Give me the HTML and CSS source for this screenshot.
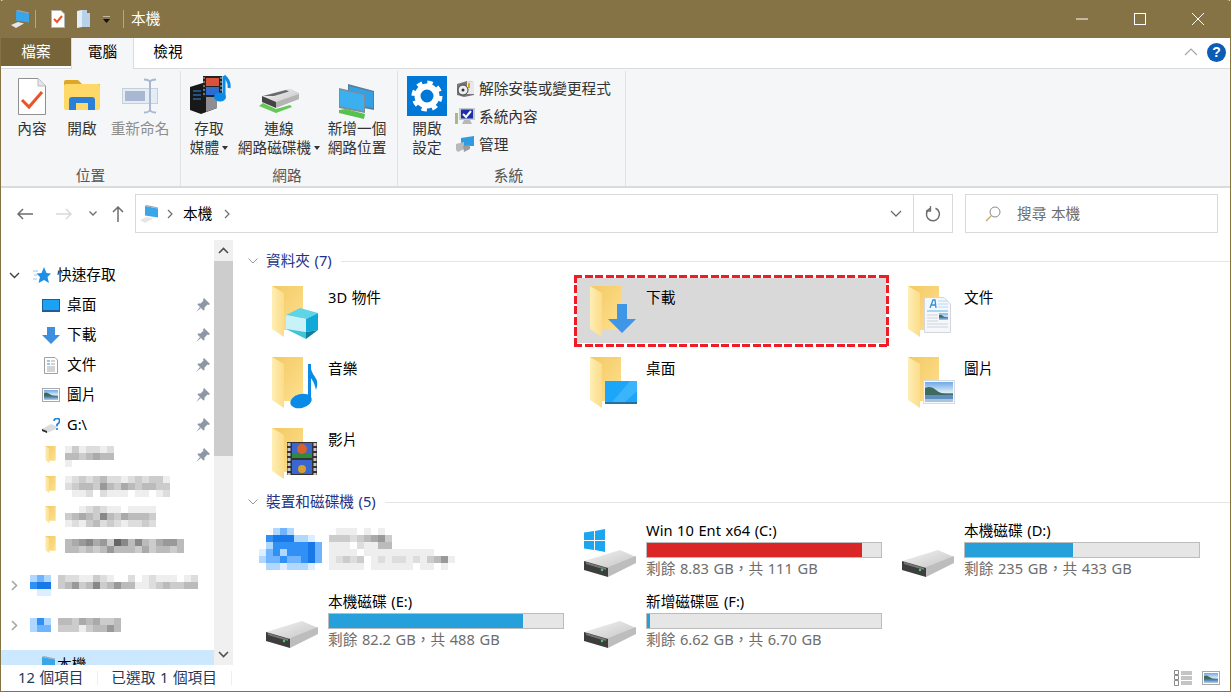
FILE: index.html
```html
<!DOCTYPE html>
<html lang="zh-Hant">
<head>
<meta charset="utf-8">
<title>本機</title>
<link rel="stylesheet" href="styles.css">
</head>
<body>
<svg class="defs" aria-hidden="true">
  <defs>
    <linearGradient id="gb" x1="0" y1="0" x2="1" y2="1"><stop offset="0" stop-color="#f2c964"/><stop offset="1" stop-color="#ffe08e"/></linearGradient>
    <linearGradient id="gf" x1="0" y1="0" x2="1" y2="0"><stop offset="0" stop-color="#ffeeb4"/><stop offset="1" stop-color="#fbdc8a"/></linearGradient>
    <linearGradient id="gsky" x1="0" y1="0" x2="0" y2="1"><stop offset="0" stop-color="#6ea8e6"/><stop offset="1" stop-color="#e4f0f8"/></linearGradient>
    <linearGradient id="gdisk" x1="0" y1="0" x2="1" y2="1"><stop offset="0" stop-color="#f4f4f4"/><stop offset="1" stop-color="#c2c2c2"/></linearGradient>
    <symbol id="folder" viewBox="0 0 34 54">
      <path d="M0 0H31V44H12Z" fill="url(#gb)"/>
      <path d="M0 0L12 7V51L0 43Z" fill="url(#gf)"/>
    </symbol>
    <symbol id="disk" viewBox="0 0 52 28">
      <path d="M0 11L36 0 52 7 22 20Z" fill="url(#gdisk)"/>
      <path d="M22 18L52 6V13L24 27Z" fill="#bdbdbd"/>
      <path d="M0 11L24 18V27L0 20Z" fill="#3d3d3d"/>
      <path d="M2 12L22 18V20L2 14Z" fill="#777"/>
      <circle cx="18" cy="20" r="1.2" fill="#3fd16a"/>
    </symbol>
    <symbol id="pin" viewBox="0 0 14 14">
      <path d="M8 0L14 6 12.500 7 11.500 6.500 8.500 9.500 8.500 12 7.500 12.500 1.500 6.500 2 5.500H4.500L7.500 2.500 7 1.500Z" fill="#8d97a5"/>
      <path d="M4 9L0 14 5 10Z" fill="#8d97a5"/>
    </symbol>
    <symbol id="scene" viewBox="0 0 28 20">
      <rect width="28" height="11" fill="url(#gsky)"/>
      <rect y="11" width="28" height="9" fill="#5f8fc0"/>
      <path d="M0 6Q6 3 11 8T28 12V13H0Z" fill="#3f6b5e"/>
      <rect y="17" width="28" height="3" fill="#aac4de"/>
    </symbol>
    <symbol id="picture" viewBox="0 0 18 14">
      <rect x=".5" y=".5" width="17" height="13" fill="#fff" stroke="#a8a8a8"/>
      <use href="#scene" x="2" y="2" width="14" height="10"/>
    </symbol>
    <symbol id="pc" viewBox="0 0 20 18">
      <path d="M6 1L19 3.500V12.500L6 10.500Z" fill="#3aa6ea"/>
      <path d="M6 1L7.500 0 19 2.500V3.500Z" fill="#9aa9b6"/>
      <path d="M1 15L8 12 14 13.500 6 18Z" fill="#e6e6e6"/>
    </symbol>
  </defs>
</svg>

<div class="window">
  <header class="titlebar">
    <svg class="qa-pc" width="20" height="18"><use href="#pc"/></svg>
    <span class="qa-sep"></span>
    <svg class="qa-check" width="14" height="18" viewBox="0 0 14 18"><path d="M.5.5H10L13.500 4V17.500H.5Z" fill="#fff" stroke="#b5b5b5"/><path d="M3 9L6 12 11 6" fill="none" stroke="#e8552a" stroke-width="2"/></svg>
    <svg class="qa-doc" width="13" height="18" viewBox="0 0 13 18"><path d="M0 1L5 0V17L0 18Z" fill="#e3eefb"/><path d="M5 0H10V3H13V17H5Z" fill="#b9d0ea"/></svg>
    <svg class="qa-drop" width="9" height="7" viewBox="0 0 9 7"><path d="M1 0H8" stroke="#fff"/><path d="M1 3H8L4.500 7Z" fill="#111"/></svg>
    <span class="qa-sep qa-sep2"></span>
    <span class="title">本機</span>
    <div class="winctl">
      <svg width="58" height="38" viewBox="0 0 58 38"><path d="M23 19H35" stroke="#fff"/></svg>
      <svg width="58" height="38" viewBox="0 0 58 38"><rect x="23.500" y="13.500" width="11" height="11" fill="none" stroke="#fff"/></svg>
      <svg width="58" height="38" viewBox="0 0 58 38"><path d="M23 13L35 25M35 13L23 25" stroke="#fff"/></svg>
    </div>
  </header>

  <nav class="tabs">
    <span class="tab tab-file">檔案</span>
    <span class="tab tab-on">電腦</span>
    <span class="tab tab-view">檢視</span>
    <svg class="rib-toggle" width="14" height="8" viewBox="0 0 14 8"><path d="M1 7L7 1 13 7" fill="none" stroke="#a6a6a6" stroke-width="1.200"/></svg>
    <span class="help">?</span>
  </nav>

  <section class="ribbon">
    <div class="group g1">
      <div class="btns">
        <div class="rbtn w48">
          <svg width="30" height="48" viewBox="0 0 30 48"><path d="M1.500 6.500H21L28.500 14V42.500H1.500Z" fill="#fff" stroke="#8f8f8f"/><path d="M21 6.500V14H28.500" fill="#e6e6e6" stroke="#bbb"/><path d="M5 28L12 35 25 20" fill="none" stroke="#e8552a" stroke-width="3"/></svg>
          <span>內容</span>
        </div>
        <div class="rbtn w52">
          <svg width="36" height="48" viewBox="0 0 36 48"><path d="M0 10Q0 8 2 8H14L18 12H36V14H0Z" fill="#dfa628"/><rect y="12" width="36" height="26" rx="2" fill="#ffd967"/><path d="M5 38V28Q5 25 8 25H28Q31 25 31 28V38H24V31H12V38Z" fill="#2a7fd8"/></svg>
          <span>開啟</span>
        </div>
        <div class="rbtn w64 off">
          <svg width="37" height="48" viewBox="0 0 37 48"><rect x=".5" y="16.500" width="35" height="15" fill="#e6ecf4" stroke="#c4d0de"/><rect x="3" y="19" width="20" height="10" fill="#a9b8d2"/><path d="M22 7.500Q27 7.500 28 10V38Q27 40.500 22 40.500M34 7.500Q29 7.500 28 10V38Q29 40.500 34 40.500" fill="none" stroke="#a9b8d2" stroke-width="2"/></svg>
          <span>重新命名</span>
        </div>
      </div>
      <div class="glabel">位置</div>
    </div>
    <div class="group g2">
      <div class="btns">
        <div class="rbtn w44">
          <svg width="44" height="48" viewBox="0 0 44 48"><path d="M3 15L19 10 30 15V36L14 42 3 38Z" fill="#181818"/><path d="M19 17L30 15V36L19 40Z" fill="#8d8d93"/><path d="M6 19H14M6 23H14M6 27H14" stroke="#2a8ee0"/><rect x="16" y="4" width="19" height="21" fill="#222"/><path d="M17 5V24M34 5V24" stroke="#bbb" stroke-dasharray="2 2"/><rect x="19" y="6" width="13" height="8" fill="#d8523c"/><rect x="19" y="15" width="13" height="8" fill="#2f6ccf"/><path d="M37 4V24" stroke="#0b8be6" stroke-width="3"/><ellipse cx="33" cy="25" rx="6" ry="4.500" fill="#0b8be6"/><path d="M37 4Q43 9 42 16" fill="none" stroke="#0b8be6" stroke-width="3"/></svg>
          <span>存取</span><span class="rline">媒體<i class="caret"></i></span>
        </div>
        <div class="rbtn w82">
          <svg width="42" height="48" viewBox="0 0 42 48"><path d="M4 24L30 17Q32 16.500 34 17.500L41 21V27L18 35 4 30Z" fill="url(#gdisk)"/><path d="M4 24L18 30V36L4 30Z" fill="#444"/><path d="M18 30L41 22V27L18 36Z" fill="#b4b4b4"/><path d="M5 24L28 18 31 19.500 16 24Z" fill="#6a6a6a"/><path d="M1 34L5 31 18 37 32 33 34 35 18 41Z" fill="#66c75a"/></svg>
          <span>連線</span><span class="rline">網路磁碟機<i class="caret"></i></span>
        </div>
        <div class="rbtn w62">
          <svg width="38" height="48" viewBox="0 0 38 48"><path d="M10 12L36 19V38L10 33Z" fill="#5a7d94"/><path d="M11 14L35 20V36L11 31Z" fill="#33a1e8"/><path d="M1 16L27 22V41L1 36Z" fill="#7d8e9a"/><path d="M2 18L26 23V39L2 34Z" fill="#3ab0f0"/><path d="M1 38L8 37 27 42 26 47 1 41Z" fill="#57c14f"/></svg>
          <span>新增一個</span><span>網路位置</span>
        </div>
      </div>
      <div class="glabel">網路</div>
    </div>
    <div class="group g3">
      <div class="btns">
        <div class="rbtn w44">
          <svg width="40" height="48" viewBox="0 0 40 48"><rect y="4" width="40" height="40" fill="#0078d7"/><circle cx="20" cy="24" r="13" fill="none" stroke="#fff" stroke-width="5" stroke-dasharray="5.200 5"/><circle cx="20" cy="24" r="9.500" fill="none" stroke="#fff" stroke-width="6"/></svg>
          <span>開啟</span><span>設定</span>
        </div>
        <ul class="rlist">
          <li><svg width="18" height="18" viewBox="0 0 18 18"><path d="M1 5L11 2 18 3V16L8 18 1 16Z" fill="#777"/><path d="M11 2L18 3V15L11 15Z" fill="#e8e8e8"/><circle cx="7" cy="11" r="5" fill="#eee" stroke="#444"/><circle cx="7" cy="11" r="1.500" fill="#333"/><path d="M13 4V9" stroke="#e8a020" stroke-width="2"/></svg><span>解除安裝或變更程式</span></li>
          <li><svg width="20" height="18" viewBox="0 0 20 18"><rect x="4" y="1" width="16" height="12" fill="#c8c8c8"/><rect x="6" y="2.500" width="12" height="9" fill="#1a2fb0"/><path d="M8 7L11 10 16 4" fill="none" stroke="#fff" stroke-width="2"/><path d="M9 13H15L17 17H7Z" fill="#b8b8b8"/><rect y="6" width="3" height="11" fill="#a8b88c"/></svg><span>系統內容</span></li>
          <li><svg width="20" height="18" viewBox="0 0 20 18"><path d="M6 3L19 1V11L6 11Z" fill="#2f9be0"/><path d="M1 9L9 7V14L3 17 1 15Z" fill="#b9b9b9"/><path d="M8 11L15 10V14L9 17Z" fill="#9c9c9c"/></svg><span>管理</span></li>
        </ul>
      </div>
      <div class="glabel">系統</div>
    </div>
  </section>

  <section class="addrrow">
    <div class="navbtns">
      <svg width="16" height="12" viewBox="0 0 16 12"><path d="M16 6H1M6 1L1 6 6 11" fill="none" stroke="#6d6d6d" stroke-width="1.500"/></svg>
      <svg width="16" height="12" viewBox="0 0 16 12"><path d="M0 6H15M10 1L15 6 10 11" fill="none" stroke="#d9d9d9" stroke-width="1.500"/></svg>
      <svg width="8" height="5" viewBox="0 0 8 5"><path d="M.5.500L4 4 7.500.500" fill="none" stroke="#6d6d6d" stroke-width="1.300"/></svg>
      <svg width="12" height="16" viewBox="0 0 12 16"><path d="M6 16V1M1 6L6 1 11 6" fill="none" stroke="#6d6d6d" stroke-width="1.500"/></svg>
    </div>
    <div class="addr">
      <svg class="addr-pc" width="20" height="18"><use href="#pc"/></svg>
      <svg class="crumb" width="6" height="10" viewBox="0 0 6 10"><path d="M1 1L5 5 1 9" fill="none" stroke="#6d6d6d" stroke-width="1.200"/></svg>
      <span class="addr-text">本機</span>
      <svg class="crumb" width="6" height="10" viewBox="0 0 6 10"><path d="M1 1L5 5 1 9" fill="none" stroke="#6d6d6d" stroke-width="1.200"/></svg>
      <svg class="addr-drop" width="12" height="7" viewBox="0 0 12 7"><path d="M1 1L6 6 11 1" fill="none" stroke="#6d6d6d" stroke-width="1.300"/></svg>
      <span class="addr-refresh"><svg width="16" height="16" viewBox="0 0 16 16"><path d="M10.500 2.300A6.500 6.500 0 1 1 5 2.500" fill="none" stroke="#6d6d6d" stroke-width="1.500"/><path d="M5.500 0V5H1" fill="none" stroke="#6d6d6d" stroke-width="1.300"/></svg></span>
    </div>
    <div class="search">
      <svg width="16" height="16" viewBox="0 0 16 16"><circle cx="10" cy="6" r="5" fill="none" stroke="#8a8a8a"/><path d="M6.500 9.500L1 15" stroke="#c9a66a" stroke-width="1.300"/></svg>
      <span>搜尋 本機</span>
    </div>
  </section>

  <div class="body">
    <aside class="sidebar">
      <div class="tree">
        <div class="row top"><svg class="chev" width="11" height="7" viewBox="0 0 11 7"><path d="M1 1L5.500 5.500 10 1" fill="none" stroke="#404040" stroke-width="1.400"/></svg>
          <svg class="star" width="18" height="17" viewBox="0 0 18 17"><path d="M11 0L13.500 6 18 6.500 14.500 10 16 16 11 13 5.500 16 7 10 3.500 6.500 8.500 6Z" fill="#1e90e8"/><path d="M0 4H5M1 8H4M0 12H4" stroke="#9cc8ea"/></svg>
          <span>快速存取</span></div>
        <div class="row kid"><svg class="ico" width="18" height="13" viewBox="0 0 18 13"><rect width="18" height="13" fill="#1d5e95"/><rect x="1" y="1" width="16" height="10" fill="#1ba1f5"/></svg><span>桌面</span><svg class="pin" width="14" height="14"><use href="#pin"/></svg></div>
        <div class="row kid"><svg class="ico" width="18" height="17" viewBox="0 0 18 17"><path d="M5 0H13V8H18L9 17 0 8H5Z" fill="#3f8fe0"/></svg><span>下載</span><svg class="pin" width="14" height="14"><use href="#pin"/></svg></div>
        <div class="row kid"><svg class="ico" width="18" height="17" viewBox="0 0 18 17"><path d="M2.500.5H13L15.500 3V16.500H2.500Z" fill="#fff" stroke="#a0a0a0"/><path d="M5 4H8M5 7H8" stroke="#2a90e0"/><path d="M9 4H13M9 7H13M5 10H13M5 12H13M5 14H13" stroke="#a8a8a8"/></svg><span>文件</span><svg class="pin" width="14" height="14"><use href="#pin"/></svg></div>
        <div class="row kid"><svg class="ico" width="18" height="14"><use href="#picture"/></svg><span>圖片</span><svg class="pin" width="14" height="14"><use href="#pin"/></svg></div>
        <div class="row kid"><svg class="ico" width="18" height="15" viewBox="0 0 18 15"><path d="M0 11L9 6 14 8V11L5 15 0 13Z" fill="#dcdcdc"/><path d="M0 11L5 13V15L0 13Z" fill="#333"/><path d="M12 3Q12 .5 15 .5T17.500 3Q17.500 5 15 6.500V8.500M15 10V12" fill="none" stroke="#1e7fd8" stroke-width="1.600"/></svg><span>G:\</span><svg class="pin" width="14" height="14"><use href="#pin"/></svg></div>
        <div class="row kid"><svg class="ico fold" width="12" height="18"><use href="#folder"/></svg><svg class="mosaic" width="49" height="21" data-rows="ecedded|bbcbabb|e"></svg><svg class="pin" width="14" height="14"><use href="#pin"/></svg></div>
        <div class="row kid"><svg class="ico fold" width="12" height="18"><use href="#folder"/></svg><svg class="mosaic" width="105" height="21" data-rows="edcdcbddedcdcce|dcbbc9bcabcbbcc|feedfdeeefeefed"></svg></div>
        <div class="row kid"><svg class="ico fold" width="12" height="18"><use href="#folder"/></svg><svg class="mosaic" width="91" height="21" data-rows=".fedcdeefeeeee|cbabc8bcabbbcb|edecbdcdeddcd"></svg></div>
        <div class="row kid"><svg class="ico fold" width="12" height="18"><use href="#folder"/></svg><svg class="mosaic" width="119" height="14" data-rows="ba98a9c68b8bca99b|bbcbcb9bbbcacbbcb"></svg></div>
        <div class="row tall"><svg class="chev chev-r" width="7" height="11" viewBox="0 0 7 11"><path d="M1 1L5.500 5.500 1 10" fill="none" stroke="#a6a6a6" stroke-width="1.600"/></svg><svg class="mosaic m-ico" width="21" height="21" data-rows="BCB|DEE|fAA"></svg><svg class="mosaic" width="140" height="21" data-rows="cddeecdeffdfedeeefed|cb9cb8cb9bbeedcbccbb"></svg></div>
        <div class="row tall"><svg class="chev chev-r" width="7" height="11" viewBox="0 0 7 11"><path d="M1 1L5.500 5.500 1 10" fill="none" stroke="#a6a6a6" stroke-width="1.600"/></svg><svg class="mosaic m-ico" width="21" height="14" data-rows="BDB|BCC"></svg><svg class="mosaic" width="63" height="14" data-rows="bbcabaccb|cccecbb9b"></svg></div>
        <div class="row sel-row"><svg class="ico nav-pc" width="20" height="18"><use href="#pc"/></svg><span>本機</span></div>
      </div>
    </aside>
    <div class="scrollbar">
      <span class="sb-btn"><svg width="11" height="7" viewBox="0 0 11 7"><path d="M1 6L5.500 1.500 10 6" fill="none" stroke="#505050" stroke-width="1.600"/></svg></span>
      <span class="sb-thumb"></span>
      <span class="sb-btn sb-end"><svg width="11" height="7" viewBox="0 0 11 7"><path d="M1 1L5.500 5.500 10 1" fill="none" stroke="#505050" stroke-width="1.600"/></svg></span>
    </div>

    <main class="main">
      <h2 class="sect"><svg width="10" height="6" viewBox="0 0 10 6"><path d="M.5.500L5 5 9.500.500" fill="none" stroke="#999"/></svg><span>資料夾 (7)</span><i></i></h2>
      <div class="grid">
        <div class="item">
          <svg class="tile" width="64" height="56" viewBox="0 0 64 56"><use href="#folder" width="34" height="54"/><path d="M14 29L28 22 46 27 34 33Z" fill="#5dd5e6"/><path d="M14 29L34 33V46L14 43Z" fill="#c8f2f7"/><path d="M34 33L46 27V44L34 46Z" fill="#10a9d8"/><path d="M14 43L34 46V53Z" fill="#40c4d8"/><path d="M34 46L46 44 34 53Z" fill="#0f7fa0"/></svg>
          <span>3D 物件</span>
        </div>
        <div class="item sel">
          <svg class="tile" width="64" height="56" viewBox="0 0 64 56"><use href="#folder" width="34" height="54"/><path d="M27 18H37V33H46L32 47 18 33H27Z" fill="#3f95e6"/></svg>
          <span>下載</span>
        </div>
        <div class="item">
          <svg class="tile" width="64" height="56" viewBox="0 0 64 56"><use href="#folder" width="34" height="54"/><path d="M16.500 11.500H36L42.500 18V46.500H16.500Z" fill="#f4f7fb" stroke="#d4d6da"/><path d="M22 22L25 14H27L28 22M23 19H27" fill="none" stroke="#2a90e0" stroke-width="1.300"/><path d="M30 15H40M30 18H40M30 21H40" stroke="#bcd8f0"/><path d="M19 25H40" stroke="#66b2e0"/><path d="M19 29H30M19 32H30M19 35H30M19 38H40M19 41H40" stroke="#d0d3d8"/><use href="#scene" x="31" y="27" width="9" height="7"/></svg>
          <span>文件</span>
        </div>
        <div class="item">
          <svg class="tile" width="64" height="56" viewBox="0 0 64 56"><use href="#folder" width="34" height="54"/><path d="M36 7H39V44H36Z" fill="#0a8be8"/><path d="M38 7Q39 15 43 20T44 33Q42 24 38 20Z" fill="#0a8be8"/><ellipse cx="29" cy="44" rx="11" ry="7" transform="rotate(-15 29 44)" fill="#0a8be8"/></svg>
          <span>音樂</span>
        </div>
        <div class="item">
          <svg class="tile" width="64" height="56" viewBox="0 0 64 56"><use href="#folder" width="34" height="54"/><rect x="15" y="24" width="32" height="23" fill="#23709f"/><rect x="15" y="24" width="32" height="21" fill="#1ba6f9"/><path d="M22 45L40 24H47V34L35 45Z" fill="#3ab4fb"/></svg>
          <span>桌面</span>
        </div>
        <div class="item">
          <svg class="tile" width="64" height="56" viewBox="0 0 64 56"><use href="#folder" width="34" height="54"/><rect x="15.500" y="23.500" width="31" height="23" fill="#f6f8fa" stroke="#d5dae0"/><use href="#scene" x="17" y="25" width="28" height="20"/></svg>
          <span>圖片</span>
        </div>
        <div class="item">
          <svg class="tile" width="64" height="56" viewBox="0 0 64 56"><use href="#folder" width="34" height="54"/><rect x="15" y="14" width="30" height="33" fill="#333"/><path d="M17 15V47M43 15V47" stroke="#c8c8c8" stroke-width="3" stroke-dasharray="3 2"/><rect x="20" y="15" width="20" height="15" fill="#3a66d0"/><rect x="20" y="32" width="20" height="14" fill="#3a66d0"/><path d="M20 26H40V30H20Z" fill="#2f8a3c"/><circle cx="30" cy="21" r="5" fill="#d8622c"/><circle cx="30" cy="41" r="4" fill="#d8a02c"/></svg>
          <span>影片</span>
        </div>
      </div>

      <h2 class="sect"><svg width="10" height="6" viewBox="0 0 10 6"><path d="M.5.500L5 5 9.500.500" fill="none" stroke="#999"/></svg><span>裝置和磁碟機 (5)</span><i></i></h2>
      <div class="grid drives">
        <div class="drive cloud">
          <svg class="mosaic m-cloud" width="63" height="42" data-rows="..BCB....|.DEEEBBA.|.BDDDDDEC|ACDBDDDEC|BCCDCCDEC|.BBABBBA."></svg>
          <svg class="mosaic" width="126" height="42" data-rows="feeefefef|cccdcba9c|eeefdeebb|eeeefeeeeeeeeeefff|edcdcfededdedecb9e|eeeeefeeeeeefeefef"></svg>
        </div>
        <div class="drive">
          <svg class="dsk" width="54" height="50" viewBox="0 0 54 50"><g fill="#1ba6ef"><path d="M0 3.500L10 2V11H0Z"/><path d="M11 2L21 0V11H11Z"/><path d="M0 12H10V21L0 19.500Z"/><path d="M11 12H21V23L11 21Z"/></g><use href="#disk" y="21" width="52" height="28"/></svg>
          <div class="dinfo"><div class="dname">Win 10 Ent x64 (C:)</div><div class="bar"><b class="red f-c"></b></div><div class="dfree">剩餘 8.83 GB，共 111 GB</div></div>
        </div>
        <div class="drive">
          <svg class="dsk" width="54" height="50" viewBox="0 0 54 50"><use href="#disk" y="21" width="52" height="28"/></svg>
          <div class="dinfo"><div class="dname">本機磁碟 (D:)</div><div class="bar"><b class="f-d"></b></div><div class="dfree">剩餘 235 GB，共 433 GB</div></div>
        </div>
        <div class="drive">
          <svg class="dsk" width="54" height="50" viewBox="0 0 54 50"><use href="#disk" y="21" width="52" height="28"/></svg>
          <div class="dinfo"><div class="dname">本機磁碟 (E:)</div><div class="bar"><b class="f-e"></b></div><div class="dfree">剩餘 82.2 GB，共 488 GB</div></div>
        </div>
        <div class="drive">
          <svg class="dsk" width="54" height="50" viewBox="0 0 54 50"><use href="#disk" y="21" width="52" height="28"/></svg>
          <div class="dinfo"><div class="dname">新增磁碟區 (F:)</div><div class="bar"><b class="f-f"></b></div><div class="dfree">剩餘 6.62 GB，共 6.70 GB</div></div>
        </div>
      </div>
    </main>
  </div>

  <footer class="status">
    <span class="st1">12 個項目</span><i class="st-sep"></i>
    <span class="st2">已選取 1 個項目</span><i class="st-sep"></i>
    <div class="views">
      <svg width="18" height="16" viewBox="0 0 18 16"><path d="M.5.5H4.500V4.500H.5ZM.5 5.500H4.500V9.500H.5ZM.5 10.500H4.500V15.500H.5Z" fill="#fff" stroke="#8a8a8a"/><path d="M7 2H18M7 4H18M7 7H18M7 9H18M7 12H18M7 14H18" stroke="#8a8a8a"/></svg>
      <svg width="18" height="16"><use href="#picture"/></svg>
    </div>
  </footer>
</div>
<script src="mosaic.js"></script>
</body>
</html>
```
FILE: styles.css
```css
* { box-sizing: border-box; }
html, body { margin: 0; height: 100%; overflow: hidden; }
body { font: 14.67px/20px "Noto Sans", "Noto Sans CJK TC", sans-serif; word-spacing: .8px; color: #000; background: #fff; }
.defs { display: block; width: 0; height: 0; overflow: hidden; }
svg { display: block; flex: none; }

.window { display: flex; flex-direction: column; height: 692px; border: solid #857344; border-width: 0 1px 1px; }

/* title bar */
.titlebar { display: flex; align-items: center; height: 38px; margin: 0 -1px; background: #857345; color: #fff; border-radius: 4px 4px 0 0; flex: none; }
.qa-pc { margin-left: 10px; }
.qa-sep { width: 1px; height: 18px; margin-left: 5px; background: #b5a883; }
.qa-check { margin-left: 15px; }
.qa-doc { margin-left: 12px; }
.qa-drop { margin-left: 12px; }
.qa-sep2 { margin-left: 12px; }
.title { margin: -2px 0 0 7px; }
.winctl { display: flex; margin-left: auto; padding-right: 4px; }

/* tabs */
.tabs { display: flex; align-items: flex-start; height: 31px; flex: none; border-bottom: 1px solid #dadbdc; }
.tab { display: block; text-align: center; height: 28px; line-height: 26px; }
.tab-file { width: 70px; background: #776539; color: #fff; }
.tab-on { width: 63px; height: 31px; background: #f5f6f7; border: 1px solid #dadbdc; border-width: 0 1px; }
.tab-view { width: 68px; }
.rib-toggle { margin: 10px 0 0 auto; }
.help { width: 19px; height: 19px; margin: 5px 4px 0 9px; border-radius: 50%; background: #0a5cb5; color: #fff; font: bold 14px/19px "Liberation Sans", sans-serif; text-align: center; }

/* ribbon */
.ribbon { display: flex; height: 119px; flex: none; background: #f5f6f7; border-bottom: 2px solid #dadbdc; }
.group { display: flex; flex-direction: column; height: 115px; margin-top: 2px; border-right: 1px solid #e1e2e3; }
.g1 { width: 180px; padding-left: 7px; }
.g2 { width: 217px; padding-left: 6px; }
.g3 { width: 228px; padding-left: 7px; }
.btns { display: flex; flex: 1; gap: 0; padding-top: 1px; }
.rbtn { display: flex; flex-direction: column; align-items: center; line-height: 19px; color: #333; }
.rbtn > span:nth-of-type(1) { margin-top: -1px; }
.rbtn.off { color: #8d8d8d; }
.w44 { width: 44px; }
.w48 { width: 48px; }
.w52 { width: 52px; }
.w62 { width: 62px; margin-left: 6px; }
.w64 { width: 64px; }
.w82 { width: 82px; margin-left: 7px; }
.rline { display: flex; align-items: center; white-space: nowrap; }
.caret { width: 0; height: 0; margin-left: 3px; border: 3px solid transparent; border-top: 4px solid #333; border-bottom: 0; }
.glabel { height: 18px; margin: -1px 0 2px; padding-right: 7px; text-align: center; line-height: 18px; color: #555; }
.g2 .glabel { padding-right: 10px; }
.g3 .glabel { padding-right: 13px; }
.rlist { list-style: none; margin: 2px 0 0 6px; padding: 0; }
.rlist li { display: flex; align-items: center; height: 28px; color: #333; }
.rlist svg { width: 20px; margin-right: 4px; }

/* address row */
.addrrow { display: flex; align-items: center; height: 52px; padding: 6px 12px 7px 0; flex: none; background: #fff; }
.navbtns { display: flex; align-items: center; width: 134px; padding-left: 16px; }
.navbtns svg:nth-child(2) { margin-left: 23px; }
.navbtns svg:nth-child(3) { margin-left: 17px; }
.navbtns svg:nth-child(4) { margin-left: 15px; }
.addr { display: flex; align-items: center; flex: 1; height: 39px; border: 1px solid #d9d9d9; }
.addr-pc { margin-left: 3px; }
.crumb { margin-left: 8px; }
.addr-text { margin: -2px 0 0 10px; }
.addr-text + .crumb { margin-left: 12px; }
.addr-drop { margin-left: auto; margin-right: 11px; }
.addr-refresh { display: flex; align-items: center; justify-content: center; width: 39px; height: 37px; border-left: 1px solid #d9d9d9; }
.search { display: flex; align-items: center; width: 253px; height: 39px; margin-left: 12px; padding-left: 19px; border: 1px solid #d9d9d9; color: #6d6d6d; }
.search span { margin: -2px 0 0 16px; }

/* body */
.body { display: flex; flex: 1; min-height: 0; }
.sidebar { width: 213px; overflow: hidden; flex: none; padding-top: 20px; }
.row { display: flex; align-items: center; height: 30px; }
.row span { margin-top: -2px; }
.top { padding-left: 8px; }
.star { margin-left: 13px; margin-right: 6px; }
.kid { padding-left: 41px; }
.kid .ico { margin-right: 7px; }
.kid .fold { margin-left: 3px; margin-right: 8px; }
.kid .mosaic { margin-top: 2px; }
.pin { margin-left: auto; margin-right: 4px; }
.mosaic { flex: none; }
.tall { height: 40px; padding-left: 10px; }
.kid + .tall { margin-top: 5px; }
.tall .m-ico { margin-left: 12px; margin-right: 7px; }
.sel-row { height: 30px; margin-top: 5px; padding-left: 35px; background: #cce8ff; }
.nav-pc { margin-right: 1px; }
.scrollbar { display: flex; flex-direction: column; width: 19px; flex: none; background: #f0f0f0; }
.sb-btn { display: flex; align-items: center; justify-content: center; height: 21px; }
.sb-thumb { height: 195px; background: #cdcdcd; }
.sb-end { margin-top: auto; }

/* main */
.main { flex: 1; min-width: 0; padding: 12px 0 0 15px; overflow: hidden; }
.sect { display: flex; align-items: center; height: 18px; margin: 0; font: inherit; line-height: 18px; color: #1e3287; }
.sect span { margin: -2px 0 0 8px; white-space: nowrap; }
.sect i { flex: 1; height: 1px; margin-left: 9px; background: #e5e5e5; }
.grid { display: grid; grid-template-columns: repeat(3, 318px); grid-auto-rows: 71px; margin: 6px 0 4px 8px; }
.item { display: flex; width: 314px; height: 70px; padding: 10px 0 0 16px; }
.item span { margin: 1px 0 0 -8px; white-space: nowrap; }
.tile { width: 64px; height: 56px; }
.sel { width: 315px; height: 72px; margin-top: -1px; padding-top: 11px;
  background:
    repeating-linear-gradient(90deg, #ee1c25 0 8px, transparent 8px 10.5px) top / 100% 3px no-repeat,
    repeating-linear-gradient(90deg, #ee1c25 0 8px, transparent 8px 10.5px) bottom / 100% 3px no-repeat,
    repeating-linear-gradient(180deg, #ee1c25 0 8px, transparent 8px 10.5px) left / 3px 100% no-repeat,
    repeating-linear-gradient(180deg, #ee1c25 0 8px, transparent 8px 10.5px) right / 3px 100% no-repeat,
    linear-gradient(#d9d9d9, #d9d9d9) 3px 3px / 309px 65px no-repeat;
}
.drives { margin: 8px 0 0 8px; }
.drive { display: flex; width: 314px; padding: 1px 0 0 10px; }
.cloud { padding: 9px 0 0 3px; gap: 7px; }
.dsk { margin-top: 9px; margin-right: 8px; }
.dname { line-height: 20px; white-space: nowrap; }
.bar { width: 236px; height: 16px; margin-top: 2px; background: #e6e6e6; border: 1px solid #bcbcbc; }
.bar b { display: block; height: 100%; background: #26a0da; }
.bar .red { background: #da2626; }
.f-c { width: 92%; }
.f-d { width: 46%; }
.f-e { width: 83%; }
.f-f { width: 1.200%; }
.dfree { line-height: 20px; color: #6d6d6d; white-space: nowrap; }

/* status */
.status { display: flex; align-items: center; height: 26px; flex: none; color: #1e395b; background: #fff; }
.status span { margin-top: -2px; }
.st1 { margin-left: 17px; }
.st-sep { width: 1px; height: 14px; margin-left: 14px; background: #eee; }
.st2 { margin-left: 13px; }
.views { display: flex; gap: 10px; margin-left: auto; margin-right: 10px; }
```
FILE: mosaic.js
```js
// Draws the blurred (pixelated) regions from compact rows of tone codes.
var BLUES = { A: '#dceeff', B: '#b0d8ff', C: '#70b4ff', D: '#3090f5', E: '#1878e8' };
document.querySelectorAll('.mosaic').forEach(function (svg) {
  var cell = 7, out = '';
  svg.dataset.rows.split('|').forEach(function (row, y) {
    row.split('').forEach(function (c, x) {
      if (c === '.') return;
      var fill = BLUES[c] || '#' + c + c + c;
      out += '<rect x="' + x * cell + '" y="' + y * cell + '" width="7" height="7" fill="' + fill + '"/>';
    });
  });
  svg.innerHTML = out;
});
```
